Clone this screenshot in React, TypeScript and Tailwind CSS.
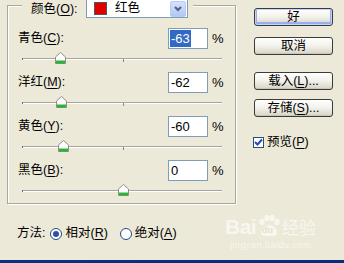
import React from "react";

const rows = [
  { name: "青色", key: "C", value: -63, selected: true },
  { name: "洋红", key: "M", value: -62 },
  { name: "黄色", key: "Y", value: -60 },
  { name: "黑色", key: "B", value: 0 },
];

function Thumb() {
  return (
    <svg width="11" height="12" viewBox="0 0 11 12">
      <path d="M0.5 5 L5.5 0.5 L10.5 5 V11.5 H0.5 Z" fill="#fdfdfb" stroke="#8f8f8a" />
      <rect x="1" y="8.5" width="9" height="3" fill="#2fb13a" />
      <rect x="1" y="8" width="9" height="1" fill="#8fe08f" />
    </svg>
  );
}

function Slider({ value }: { value: number }) {
  // track runs -100..100 over 200px, thumb is 11px wide
  const left = `${96 + value}px`;
  return (
    <div className="relative h-[23px] ml-[4px] w-[200px]">
      <div className="absolute left-0 top-[9px] w-[200px] h-[2px] border-t border-[#a6a5a0] bg-white" />
      <div className="absolute left-0 top-[9px] w-[1px] h-[2px] bg-[#6f6f6f]" />
      <div className="absolute left-[101px] top-[10px] w-[1px] h-[3px] bg-[#8a8a8a]" />
      <div className="absolute top-[3px] w-[11px] h-[12px]" style={{ left }}>
        <Thumb />
      </div>
    </div>
  );
}

function Btn({ children, def }: { children: React.ReactNode; def?: boolean }) {
  return (
    <div
      className={
        "w-[79px] h-[18px] rounded-[3px] border border-[#3b3b3b] bg-gradient-to-b from-white via-[#f2f1ea] to-[#d6d3c6] flex items-center justify-center " +
        (def ? "shadow-[inset_0_0_0_1px_#c3d3fd,inset_0_-1px_0_2px_#97aeed]" : "shadow-[inset_0_-1px_0_#c9c6b8]")
      }
    >
      {children}
    </div>
  );
}

function U({ children }: { children: React.ReactNode }) {
  return <span className="underline underline-offset-2">{children}</span>;
}

export default function App() {
  return (
    <div className="relative w-[344px] h-[263px] bg-[#ece9d8] overflow-hidden flex flex-col text-[12.5px] leading-none text-black font-['Liberation_Sans','Noto_Sans_CJK_SC',sans-serif]">
      <div className="flex h-[208px] shrink-0">
        <div className="w-[247px] shrink-0 pl-[7px] pt-[5px]">
          <div className="relative w-[229px] h-[199px] border border-[#aca899] shadow-[inset_1px_1px_0_#fff,1px_1px_0_#fff]">
            <div className="absolute -top-[6px] left-[14px] h-[18px] pl-[9px] pr-[5px] bg-[#ece9d8] flex items-center">
              <span className="w-[55px]">
                颜色(<U>O</U>):
              </span>
              <div className="w-[102px] h-[18px] bg-white border-x border-b border-[#7f9db9] flex items-center">
                <div className="ml-[7px] w-[13px] h-[13px] bg-[#e00000] border border-[#555]" />
                <span className="ml-[8px] flex-1">红色</span>
                <div className="w-[16px] h-[16px] mr-[1px] rounded-[2px] border border-[#b7cbf5] bg-gradient-to-b from-[#d5e2fd] to-[#b2c7f4] flex items-center justify-center">
                  <svg width="8" height="6" viewBox="0 0 8 6">
                    <path d="M1 1 L4 4 L7 1" fill="none" stroke="#4d6185" strokeWidth="2" />
                  </svg>
                </div>
              </div>
            </div>
            <div className="pt-[22px] pl-[10px] flex flex-col">
              {rows.map((r) => (
                <div key={r.key} className="flex flex-col">
                  <div className="flex items-center h-[21px]">
                    <span className="w-[150px]">
                      {r.name}(<U>{r.key}</U>):
                    </span>
                    <div className="w-[40px] h-[21px] bg-white border border-[#7f9db9] flex items-center pl-[1px] text-[13px]">
                      {r.selected ? (
                        <span className="bg-[#316ac5] text-white px-[1px] py-[2px]">{r.value}</span>
                      ) : (
                        <span className="pl-[1px]">{r.value}</span>
                      )}
                    </div>
                    <span className="ml-[4px] text-[13px]">%</span>
                  </div>
                  <Slider value={r.value} />
                </div>
              ))}
            </div>
          </div>
        </div>
        <div className="flex flex-col pt-[8px] pl-[7px]">
          <Btn def>好</Btn>
          <div className="h-[11px]" />
          <Btn>取消</Btn>
          <div className="h-[17px]" />
          <Btn>
            载入(<U>L</U>)...
          </Btn>
          <div className="h-[9px]" />
          <Btn>
            存储(<U>S</U>)...
          </Btn>
          <div className="flex items-center mt-[19px] -ml-[1px]">
            <div className="w-[11px] h-[11px] bg-white border border-[#1c5180] flex items-center justify-center">
              <svg width="9" height="9" viewBox="0 0 9 9">
                <path d="M1 4 L3.5 6.5 L8 1.5" fill="none" stroke="#2a49b8" strokeWidth="2" />
              </svg>
            </div>
            <span className="ml-[3px]">
              预览(<U>P</U>)
            </span>
          </div>
        </div>
      </div>
      <div className="flex-1 flex items-center pl-[17px] pb-[1px]">
        <span>方法:</span>
        <div className="ml-[5px] w-[12px] h-[12px] rounded-full border border-[#1c5180] bg-white flex items-center justify-center">
          <div className="w-[6px] h-[6px] rounded-full bg-[#2d4fa8]" />
        </div>
        <span className="ml-[3px]">
          相对(<U>R</U>)
        </span>
        <div className="ml-[12px] w-[12px] h-[12px] rounded-full border border-[#1c5180] bg-white" />
        <span className="ml-[3px]">
          绝对(<U>A</U>)
        </span>
      </div>
      <div className="h-[3px] shrink-0 bg-gradient-to-r from-[#0c2f80] to-[#0a2c7c]" />

      <div className="absolute left-[225px] top-[214px] flex flex-col items-center text-[#f8f6ef]">
        <div className="flex items-center">
          <span className="text-[21px] font-bold tracking-tight">Bai</span>
          <div className="relative w-[24px] h-[24px] mx-[1px]">
            <svg width="24" height="24" viewBox="0 0 24 24" className="absolute left-0 top-0">
              <ellipse cx="5" cy="8" rx="2.6" ry="3.2" fill="#f8f6ef" />
              <ellipse cx="10" cy="4" rx="2.6" ry="3.2" fill="#f8f6ef" />
              <ellipse cx="15" cy="4" rx="2.6" ry="3.2" fill="#f8f6ef" />
              <ellipse cx="20" cy="8" rx="2.6" ry="3.2" fill="#f8f6ef" />
              <path d="M4 20 C4 14 8 11 12 11 C16 11 20 14 20 20 C20 23 4 23 4 20 Z" fill="#f8f6ef" />
            </svg>
            <span className="absolute left-[5px] top-[12px] text-[9px] font-bold text-[#e4e0cf]">du</span>
          </div>
          <span className="text-[17px] font-['Noto_Sans_CJK_SC',sans-serif]">经验</span>
        </div>
        <span className="text-[9px] mt-[3px] tracking-[0.5px]">jingyan.baidu.com</span>
      </div>
    </div>
  );
}
